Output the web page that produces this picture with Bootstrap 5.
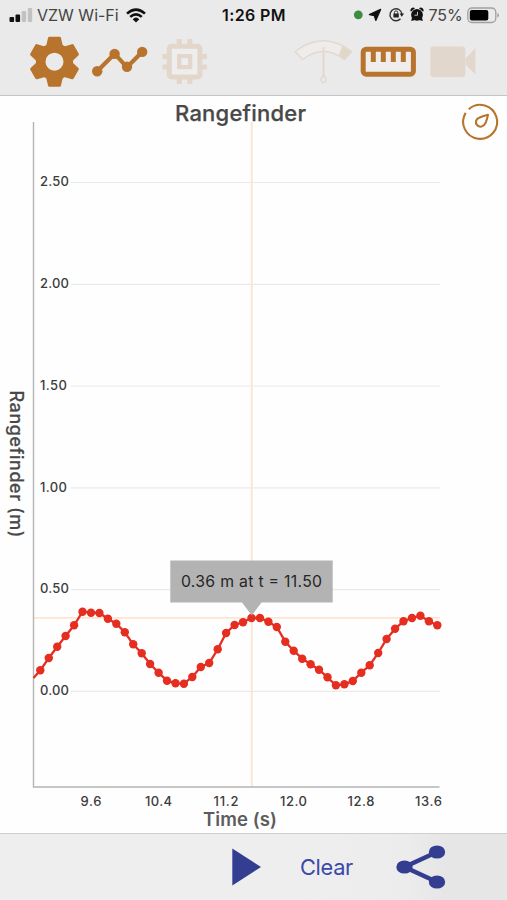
<!DOCTYPE html>
<html lang="en">
<head>
<meta charset="utf-8">
<meta name="viewport" content="width=device-width, initial-scale=1">
<title>Rangefinder</title>
<link href="https://cdn.jsdelivr.net/npm/bootstrap@5.3.0/dist/css/bootstrap.min.css" rel="stylesheet">
<style>
  body { font-family: Inter, "Liberation Sans", sans-serif; background: #fefefe; }
  svg { display: block; flex: none; }
  .screen { width: 507px; height: 900px; }
  .top-area { height: 96px; background: #eaeaea; border-bottom: 1px solid #c4c4c4; }
  .status { height: 30px; font-size: 16px; line-height: 30px; color: #444; padding: 0 8px 0 9px; }
  .status .side { width: 213px; }
  .status .carrier { margin-left: 4px; width: 82px; letter-spacing: 0; white-space: nowrap; }
  .status .wifi { margin-left: 7px; }
  .status .clock { width: 66px; font-weight: 600; color: #111; letter-spacing: .4px; white-space: nowrap; }
  .status .right-side { width: 149px; }
  .status .percent { width: 34px; letter-spacing: -.1px; white-space: nowrap; }
  .tools { height: 63px; padding: 0 30px; }
  .tools button, .actions button { padding: 0; border: 0; background: none; }
  .plot text { fill: #3c3c3c; }
  .plot .heading { font-weight: 500; fill: #484848; }
  .plot .axis-title { font-weight: 600; fill: #5c5c5c; }
  .plot .ticks { font-size: 13px; font-weight: 500; }
  .actions { height: 67px; border-top: 1px solid #cfcfcf; background: linear-gradient(90deg, #eee 0 60%, #ececec 80%, #e6e6e6 88%); padding-left: 232px; }
  .actions .clear { margin-left: 38px; width: 55px; font-size: 21.8px; line-height: 30px; letter-spacing: -.3px; color: #3a49a8; white-space: nowrap; }
  .actions .share { margin-left: 42px; }
</style>
<script src="https://cdn.jsdelivr.net/npm/bootstrap@5.3.0/dist/js/bootstrap.bundle.min.js"></script>
</head>
<body>
<main class="screen d-flex flex-column overflow-hidden">
  <header class="top-area flex-shrink-0">
    <div class="status d-flex align-items-center">
      <div class="side d-flex align-items-center">
        <svg width="24" height="16" viewBox="0 0 24 16">
          <rect x=".5" y="10" width="4.6" height="5" rx="1" fill="#111"/><rect x="6.5" y="7.5" width="4.6" height="7.5" rx="1" fill="#111"/>
          <rect x="12.7" y="4" width="4.4" height="11" rx="1" fill="#c2c2c2"/><rect x="18.8" y="1" width="4.4" height="14" rx="1" fill="#c2c2c2"/>
        </svg>
        <span class="carrier">VZW Wi-Fi</span>
        <svg class="wifi" width="20" height="15" viewBox="0 0 20 15" fill="none" stroke="#111" stroke-width="2.6">
          <path d="M1 5.6Q10-2.4 19 5.6M4.2 8.9Q10 3.7 15.8 8.9"/><path d="M6.7 11.2Q10 8 13.3 11.2L10 14.6Z" fill="#111" stroke="none"/>
        </svg>
      </div>
      <div class="clock">1:26 PM</div>
      <div class="right-side d-flex align-items-center ms-auto">
        <svg width="75" height="20" viewBox="350 5 75 20">
          <circle cx="358.3" cy="14.8" r="4.4" fill="#3d8c40"/>
          <path d="M380.6 9.400 375.800 20.400 374.400 15.700 369.400 14.600Z" fill="#111" stroke="#111" stroke-width="1.300" stroke-linejoin="round"/>
          <g fill="none" stroke="#333" stroke-width="1.4"><path d="M400.500 18.800A6 6 0 1 1 402 14.200"/><path d="M394.400 14v-1.400a1.700 1.700 0 0 1 3.400 0V14" stroke-width="1"/></g>
          <rect x="393.400" y="13.400" width="5.400" height="4" rx=".5" fill="#222"/><path d="M399.600 13.500h4.400l-2.200 3.200z" fill="#222"/>
          <circle cx="417" cy="14.800" r="5.900" fill="#111"/><path d="M410.800 11.800a2.800 2.800 0 0 1 4.200-3.600zM423.200 11.800a2.800 2.800 0 0 0-4.200-3.600zM412 17.500l-.8 3.500 3.800-1zM422 17.500l.8 3.500-3.800-1z" fill="#111"/>
          <path d="M417.500 11.800v3.400h-3" fill="none" stroke="#d8d8d8" stroke-width=".9"/>
        </svg>
        <span class="percent ms-auto">75%</span>
        <svg class="ms-auto" width="33" height="18" viewBox="466 5 33 18">
          <rect x="467.800" y="7" width="28" height="14.500" rx="4.200" fill="none" stroke="#a0a0a0" stroke-width="1.300"/>
          <rect x="469.800" y="9" width="18.500" height="10.500" rx="2" fill="#000"/><path d="M497.400 12v4.500q1.500-.6 1.500-2.250t-1.500-2.250" fill="#999"/>
        </svg>
      </div>
    </div>
    <div class="tools d-flex align-items-center">
      <button type="button" aria-label="Settings">
        <svg width="50" height="52" viewBox="-24.500 -25.700 50 52">
          <defs><path id="tooth" d="M-8.300-16-6.500-23.800Q-6.300-25-5-25H5Q6.300-25 6.500-23.800L8.300-16 8.300-10H-8.300Z"/></defs>
          <g fill="#b8742c">
            <path fill-rule="evenodd" d="M-18.600 0a18.600 18.600 0 1 0 37.200 0a18.600 18.600 0 1 0-37.200 0M-9 0a9 9 0 1 0 18 0a9 9 0 1 0-18 0"/>
            <use href="#tooth"/><use href="#tooth" transform="rotate(60)"/><use href="#tooth" transform="rotate(120)"/><use href="#tooth" transform="rotate(180)"/><use href="#tooth" transform="rotate(240)"/><use href="#tooth" transform="rotate(300)"/>
          </g>
        </svg>
      </button>
      <button type="button" class="ms-2" aria-label="Graph">
        <svg width="64" height="52" viewBox="88 36 64 52" fill="#b8742c">
          <path d="M97.200 71.300 114.600 53.700 127 67.300 142.300 51.700" fill="none" stroke="#b8742c" stroke-width="4.200"/>
          <circle cx="97.200" cy="71.300" r="5.200"/><circle cx="114.600" cy="53.900" r="5.200"/><circle cx="127" cy="66.700" r="5.200"/><circle cx="142.200" cy="51.900" r="5.200"/>
        </svg>
      </button>
      <button type="button" class="ms-2" aria-label="Processor">
        <svg width="50" height="52" viewBox="160 36 50 52" fill="none" stroke="#e2d7ca">
          <rect x="169.300" y="46.300" width="30.600" height="30.600" rx="2.500" fill="#eee" stroke-width="5"/>
          <rect x="179.200" y="56.100" width="11" height="11" stroke-width="4.200"/>
          <path d="M179.300 39v6M189.800 39v6M179.300 78v6M189.800 78v6M162.500 56.500h6M162.500 67h6M201 56.500h6M201 67h6" stroke-width="5"/>
        </svg>
      </button>
      <button type="button" class="ms-auto" aria-label="Meter">
        <svg width="62" height="52" viewBox="292 36 62 52" fill="none" stroke="#e3d9cd" stroke-width="1.500">
          <path d="M295 51.500Q323.500 30 351.500 51.500L344.500 59.500Q323.500 43.500 302.500 59.500Z" fill="#eeedeb" stroke-linejoin="round"/>
          <path d="M343 46.300 351.500 51.500 344.500 59.500 339 55.800Z" fill="#e2d6c9"/>
          <path d="M323.500 47V76" stroke-width="2"/><path d="M323.500 75Q320.500 79 321 80.500A2.600 2.600 0 0 0 326 80.500Q326.500 79 323.500 75Z"/>
        </svg>
      </button>
      <button type="button" aria-label="Rangefinder">
        <svg width="66" height="52" viewBox="354 36 66 52">
          <rect x="363.200" y="49.200" width="50.200" height="25" rx="3" fill="#f0eeec" stroke="#b8742c" stroke-width="5"/>
          <path d="M373.300 50V62M383.300 50V62M393.300 50V62M403.300 50V62" stroke="#b8742c" stroke-width="5"/>
        </svg>
      </button>
      <button type="button" aria-label="Camera">
        <svg width="57" height="52" viewBox="420 36 57 52" fill="#e2d7cc">
          <rect x="430.300" y="46.500" width="35" height="30.500" rx="3"/><path d="M465.500 58.500 475.500 48V74.500L465.500 64.500Z"/>
        </svg>
      </button>
    </div>
  </header>

  <section class="plot flex-shrink-0">
    <svg width="507" height="737" viewBox="0 96 507 737" role="img" aria-label="Rangefinder distance over time">
      <defs><marker id="dot" markerUnits="userSpaceOnUse" markerWidth="10" markerHeight="10" refX="5" refY="5"><circle cx="5" cy="5" r="4.200" fill="#e52d20"/></marker></defs>
      <path d="M71 182.500H440M71 284.300H440M71 386H440M71 487.800H440M71 589.600H440M71 691.400H440" stroke="#eaeaea" stroke-width="1.200"/>
      <path d="M251.800 122V787" stroke="#fae7d2" stroke-width="2"/><path d="M34 617.800H440" stroke="#fde5cf" stroke-width="1.800"/>
      <path d="M33.500 122V787H439.500" fill="none" stroke="#b4b4b4" stroke-width="1.400"/>
      <text class="heading" x="175" y="120.800" font-size="22" textLength="131" stroke="#484848" stroke-width=".25">Rangefinder</text>
      <text class="axis-title" x="203" y="826.300" font-size="18.500" textLength="74">Time (s)</text>
      <text class="heading" transform="translate(10 390.500) rotate(90)" font-size="18" textLength="147" stroke="#484848" stroke-width=".2">Rangefinder (m)</text>
      <g class="ticks">
        <text x="40" y="186.300" textLength="29">2.50</text><text x="40" y="288.100" textLength="29">2.00</text><text x="40" y="389.700" textLength="27">1.50</text>
        <text x="40" y="491.500" textLength="27">1.00</text><text x="40" y="593.200" textLength="29">0.50</text><text x="40" y="695" textLength="29">0.00</text>
        <text x="80.500" y="806.200" textLength="21">9.6</text><text x="145" y="806.200" textLength="27">10.4</text><text x="213.500" y="806.200" textLength="25">11.2</text>
        <text x="280" y="806.200" textLength="27">12.0</text><text x="347.500" y="806.200" textLength="27">12.8</text><text x="415" y="806.200" textLength="27">13.6</text>
      </g>
      <polyline fill="none" stroke="#e52d20" stroke-width="2.300" marker-mid="url(#dot)" marker-end="url(#dot)" points="33.500,678 40.300,670.300 48.800,658 57.200,646.700 65.600,636 74.100,625.300 82.500,611.700 91,612.700 99.400,613 107.900,618.700 116.300,623.700 124.800,632.300 133.200,644.300 141.700,653.300 150.100,664 158.600,672.700 167,680.700 175.500,683.300 183.900,683.700 192.300,677 200.800,667 209.200,663 217.700,649.300 226.100,633 234.600,625 243,622.300 251.500,618 259.900,618 268.400,621.700 276.800,627 285.300,641.700 293.700,650.700 302.200,658.700 310.600,664.300 319,669.700 327.500,677.300 335.900,685.300 344.400,684.300 352.800,681 361.300,672.700 369.700,665.300 378.200,653 386.600,639 395.100,628.700 403.500,621.300 412,618 420.400,615.700 428.900,621.300 437.300,625.300"/>
      <path d="M170.300 560.500H332.700V602.500H261.500L251.800 615.500 242 602.500H170.300Z" fill="#b3b3b3"/>
      <text x="181" y="587" font-size="15.800" textLength="141" style="fill:#262626">0.36 m at t = 11.50</text>
      <g fill="none" stroke="#b8742c" stroke-width="2.100">
        <path d="M465.700 112.900A17 17 0 1 0 468.800 109.200"/>
        <path d="M488 114.700Q487.300 119 485.400 123.200C483.700 127.200 479.400 127.500 477.300 125.300C474.800 122.600 475.800 119 479.200 117.700Q483.500 115.600 488 114.700Z" stroke-linejoin="round"/>
      </g>
    </svg>
  </section>

  <footer class="actions d-flex align-items-center flex-shrink-0">
    <button type="button" aria-label="Play"><svg width="29" height="38" viewBox="0 0 29 38"><path d="M.3.500V37.500L29 19Z" fill="#343e91"/></svg></button>
    <button type="button" class="clear">Clear</button>
    <button type="button" class="share" aria-label="Share">
      <svg width="50" height="44" viewBox="0 0 50 44" fill="#343e91"><path d="M41 7 8.500 22 41 37" fill="none" stroke="#343e91" stroke-width="4.500"/><ellipse cx="41" cy="7" rx="8.200" ry="6.600"/><ellipse cx="8.500" cy="22" rx="8.200" ry="6.600"/><ellipse cx="41" cy="37" rx="8.200" ry="6.600"/></svg>
    </button>
  </footer>
</main>
</body>
</html>
